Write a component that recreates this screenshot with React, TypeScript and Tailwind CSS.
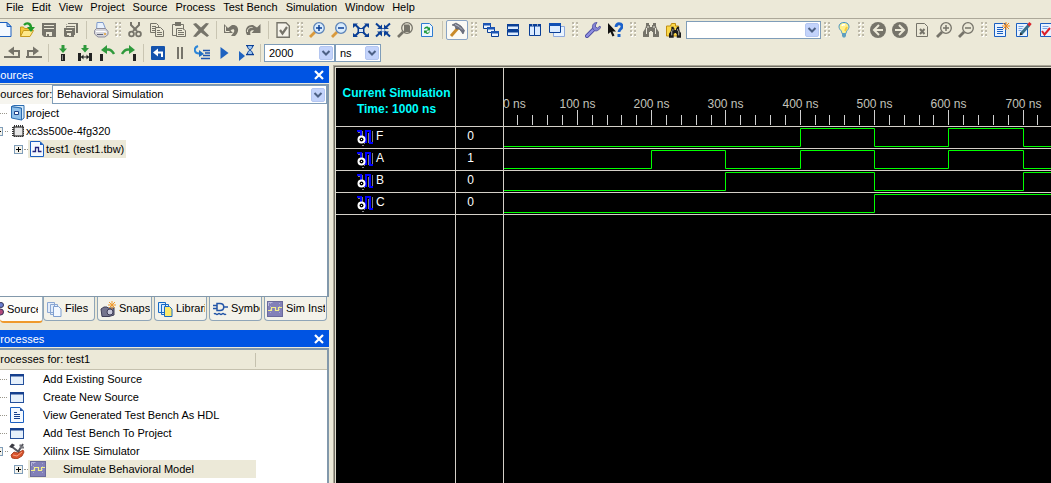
import type { ReactNode } from "react";

const G = "#76746a";
const NAVY = "#0a3f96";

function Ico({ children, className = "" }: { children: ReactNode; className?: string }) {
  return (
    <svg viewBox="0 0 16 16" className={`size-4 shrink-0 ${className}`} fill="none" aria-hidden="true">
      {children}
    </svg>
  );
}

/* ---------- toolbar drawings ---------- */

const PageBlue = ({ children }: { children?: ReactNode }) => (
  <>
    <path d="M2.500 .500h7.500l4 4v10h-11.500z" fill="#f4f9ff" stroke="#1b5fc0" />
    <path d="M10 .500v4h4z" fill="#a9cdf2" stroke="#1b5fc0" />
    {children}
  </>
);

const Magnifier = ({ rim, glass, handle, sign }: { rim: string; glass: string; handle: string; sign: string }) => (
  <>
    <path d="M6 10L1 15" stroke={handle} strokeWidth="2.800" />
    <circle cx="10" cy="6" r="5.300" fill={glass} stroke={rim} strokeWidth="1.300" />
    {sign === "plus" && <path d="M7 6h6M10 3v6" stroke={rim === G ? G : NAVY} strokeWidth="1.500" />}
    {sign === "minus" && <path d="M7 6h6" stroke={rim === G ? G : NAVY} strokeWidth="1.500" />}
  </>
);

const Binoculars = ({ color }: { color: string }) => (
  <>
    <path d="M3 1h3v2h1v2h2V3h1V1h3v3l1 3 2 3v5h-6v-5H9V9H7v1H6v5H0v-5l2-3 1-3z" fill={color} />
    <path d="M3.500 6v6M12.500 6v6M5 4v2M11 4v2" stroke="#e9e6da" />
  </>
);

const Folder = () => (
  <path d="M1.500 14V4h4l1-2.500h4V4h3v10z" fill="#fbd84a" stroke="#c18f10" />
);

const icons: Record<string, ReactNode> = {
  new: <PageBlue />,
  open: (
    <>
      <path d="M1.500 14V5h3l1 1.500h5V14z" fill="#f5c93a" stroke="#c79a1e" />
      <path d="M1.500 14.500l3-6h10l-3.500 6z" fill="#ffe98a" stroke="#c79a1e" />
      <path d="M5 3c3-3 7-1.500 7 3" stroke="#229a2b" strokeWidth="2.400" />
      <path d="M8 5h8L12 10z" fill="#229a2b" />
    </>
  ),
  save: (
    <>
      <path d="M1 1h14v14H3l-2-2z" fill={G} />
      <path d="M3 3.500h10M3 6.500h10" stroke="#ece9d8" />
      <path d="M5 10h6v4H8v-2H6v2H5z" fill="#ece9d8" />
    </>
  ),
  saveall: (
    <>
      <path d="M5 1h10v10h-2V3H5zM3 3h1v-1M3 4h9v9h-2V6H3z" fill={G} />
      <path d="M1 6h10v9H2l-1-1z" fill={G} />
      <path d="M3 8.500h6M5 2.500h8M3.500 5.500h8" stroke="#ece9d8" />
      <path d="M4 11h4v3H6v-1H4z" fill="#ece9d8" />
    </>
  ),
  print: (
    <>
      <path d="M3.500 8L4 .500h6l3 7.500z" fill="#e8f1fc" stroke="#7f9bcc" />
      <path d="M1.500 8.500l2-2h9l2.500 3v3l-3 2.500h-7L1.500 12z" fill="#d6d6dc" stroke="#8e8e9c" />
      <path d="M3 9.500h9l2 1" stroke="#fff" />
      <path d="M4 12.500h6" stroke="#5f6478" />
      <path d="M11 12h2" stroke="#e4a030" strokeWidth="1.500" />
    </>
  ),
  cut: (
    <>
      <path d="M4 0v3l6 6M12 0v3L6 9" stroke={G} strokeWidth="2" />
      <circle cx="4.500" cy="12" r="2.400" stroke={G} strokeWidth="1.800" />
      <circle cx="11.500" cy="12" r="2.400" stroke={G} strokeWidth="1.800" />
    </>
  ),
  copy: (
    <>
      <path d="M1.500 1.500h6l2 2v7h-8z" fill="#ece9d8" stroke={G} />
      <path d="M3 4.500h4M3 6.500h5M3 8.500h3" stroke={G} />
      <path d="M6.500 5.500h5l3 3v6h-8z" fill="#ece9d8" stroke={G} />
      <path d="M8 8.500h3M8 10.500h5M8 12.500h5" stroke={G} />
    </>
  ),
  paste: (
    <>
      <path d="M1.500 2.500h11v11h-11z" stroke={G} />
      <path d="M4 0h6v4H4z" fill={G} />
      <path d="M5.500 6.500h6l3 2v6h-9z" fill="#ece9d8" stroke={G} />
      <path d="M7 8.500h4M7 10.500h6M7 12.500h6" stroke={G} />
    </>
  ),
  del: <path d="M0 2l3-1 5 4.500L13 1l3 .500-5.500 6.500 5.500 5.500L14 15l-6-4.500L3 15l-3-.500L5.500 8z" fill={G} />,
  undo: (
    <>
      <path d="M1 2v9h9L7.500 8.500C10 6.500 12 7 11 10l-3 4h4c5-4 4-12-3-11L5 6z" fill={G} />
      <path d="M2.500 4.500v5h4" stroke="#ece9d8" />
    </>
  ),
  redo: (
    <>
      <path d="M15.500 2v9h-9L9 8.500C6 7.500 4.500 9 5.500 13H2C-1 8 2 2 8 3l4 2.500z" fill={G} />
      <path d="M2.500 10c-.5-3 2-5 5-4.500" stroke="#ece9d8" />
    </>
  ),
  checkdoc: (
    <>
      <path d="M2 .700h9l3.300 3.300v11.300H2z" fill="#f5f3ea" stroke={G} strokeWidth="1.400" />
      <path d="M5 8l2.500 3.500L12 5" stroke={G} strokeWidth="2.200" />
    </>
  ),
  zoomin: <Magnifier rim="#5b83b8" glass="#d9ecfd" handle="#d99a3c" sign="plus" />,
  zoomout: <Magnifier rim="#5b83b8" glass="#d9ecfd" handle="#d99a3c" sign="minus" />,
  fit: (
    <>
      <path d="M2 2.500l12 11.500M14 2.500L2 14" stroke={NAVY} strokeWidth="2" />
      <path d="M0 6V1.500h5zM16 6V1.500h-5zM0 11v4h5zM16 11v4h-5zM4.500 6h7v5h-7z" fill={NAVY} />
      <path d="M6 7h4v3H6z" fill="#dce6ef" />
    </>
  ),
  shrink: (
    <>
      <path d="M1 1.500l14 13M15 1.500l-14 13" stroke={NAVY} strokeWidth="2" />
      <path d="M2 7h5V2.500zM14 7H9V2.500zM2 9.500h5v5zM14 9.500H9v5z" fill={NAVY} />
      <path d="M6.500 7h3v2.500h-3z" fill="#dce6ef" />
    </>
  ),
  findgray: (
    <>
      <path d="M6 10L1 15" stroke={G} strokeWidth="2.600" />
      <circle cx="10" cy="6" r="5.300" fill="#ece9d8" stroke={G} strokeWidth="1.300" />
      <path d="M7 2.500h5l1 1.500v6H7z" fill={G} />
    </>
  ),
  refresh: (
    <>
      <path d="M2.500 1.500h8l3 3v10h-11z" fill="#edf6ff" stroke="#2e7bd0" />
      <path d="M5 7c1-3 4-3 5-1l1-1v3.500H7.500L9 7C8 6 6.500 6 6 7z" fill="#1d9a3a" />
      <path d="M11 9.500c-1 3-4 3-5 1l-1 1V8.500h3.500L7.500 10c.5 1 2 1 2.500-.500z" fill="#1d9a3a" />
    </>
  ),
  hammer: (
    <>
      <path d="M9 6L2 14" stroke="#c98b2b" strokeWidth="3" />
      <path d="M3 3l4-2 5 3 3.500 4.500L14 12l-2-3-2-2H7l-1-3z" fill="#6f7382" stroke="#4c5060" strokeWidth=".600" />
      <path d="M6 2.500l4 2 3 3" stroke="#b9bdc9" />
    </>
  ),
  cascade: (
    <>
      <path d="M.500 1.500h7v5h-7zM4.500 5.500h7v5h-7zM8.500 9.500h7v5h-7z" fill="#e9f3ff" stroke={NAVY} />
      <path d="M0 1h8v2.500H0zM4 5h8v2.500H4zM8 9h8v2.500H8z" fill="#1d56b5" />
    </>
  ),
  tileh: (
    <>
      <path d="M2.500 2.500h11v5h-11zM2.500 8.500h11v5h-11z" fill="#dcecff" stroke={NAVY} />
      <path d="M2 2h12v2.500H2zM2 8h12v2.500H2z" fill={NAVY} />
    </>
  ),
  tilev: (
    <>
      <path d="M2.500 2.500h5v11h-5zM7.500 2.500h6v11h-6z" fill="#dcecff" stroke={NAVY} />
      <path d="M2 2h12v2.500H2z" fill={NAVY} />
      <path d="M5 3h1M10 3h1" stroke="#fff" />
    </>
  ),
  windows: (
    <>
      <path d="M4.500 4.500h11v10h-11z" fill="#e9f3ff" stroke="#8ea9dc" />
      <path d="M.500 1.500h11v9H.500z" fill="#dcecff" stroke={NAVY} />
      <path d="M0 1h12v3H0z" fill="#0f4fb4" />
    </>
  ),
  wrench: (
    <>
      <path d="M2 14l7-7" stroke="#4a4a9e" strokeWidth="4" strokeLinecap="round" />
      <path d="M2 14l7-7" stroke="#8f8fe0" strokeWidth="2.400" strokeLinecap="round" />
      <path d="M12 .500C8 .500 6.500 4 8 7s5.500 2.500 7.500-1.500l-.500-1.500-2.500 2-2-1 0-2z" fill="#8484d4" stroke="#4a4a9e" strokeWidth=".800" />
    </>
  ),
  whats: (
    <>
      <path d="M1 1v11l2.500-2 2 4.500 2-1-2-4H9z" fill="#111" />
      <path d="M9 5c0-4.500 6-4 6-.500 0 2.500-3 2.500-3 5.500" stroke="#1b62cc" strokeWidth="2.800" />
      <path d="M10.500 12h3v3h-3z" fill="#1b62cc" />
    </>
  ),
  binoc: <Binoculars color={G} />,
  folderbinoc: (
    <>
      <Folder />
      <g transform="translate(4 4) scale(.78)">
        <Binoculars color="#1b1b1b" />
      </g>
    </>
  ),
  bulb: (
    <>
      <path d="M8 .500c-5 0-6 4.500-4 7 1.500 1.500 1.500 2 2 4h4c.5-2 .5-2.500 2-4 2-2.500 1-7-4-7z" fill="#fff08a" stroke="#3f93c9" />
      <path d="M6 4c.5-1.500 2-1.500 3-1" stroke="#fff" strokeWidth="1.500" />
      <path d="M9 9l2-4" stroke="#f8c93c" strokeWidth="2" />
      <path d="M6 11h4v3l-1 1.500H7L6 14z" fill="#5f9fc0" />
    </>
  ),
  back: (
    <>
      <circle cx="8" cy="8" r="8" fill={G} />
      <path d="M9 3L4 8l5 5M4 8h9" stroke="#ece9d8" strokeWidth="2" />
    </>
  ),
  fwd: (
    <>
      <circle cx="8" cy="8" r="8" fill={G} />
      <path d="M7 3l5 5-5 5M12 8H3" stroke="#ece9d8" strokeWidth="2" />
    </>
  ),
  docx: (
    <>
      <path d="M2.500 1.500h8l3 3v10h-11z" stroke={G} />
      <path d="M6 7l4.500 5M10.500 7L6 12" stroke={G} strokeWidth="2" />
    </>
  ),
  gzoomin: <Magnifier rim={G} glass="#ece9d8" handle={G} sign="plus" />,
  gzoomout: <Magnifier rim={G} glass="#ece9d8" handle={G} sign="minus" />,
  docstar: (
    <>
      <path d="M.500 1.500h11v13H.500z" fill="#e9f3ff" stroke="#1b5fc0" />
      <path d="M3 5.500h6M3 7.500h6M3 9.500h6M3 11.500h6" stroke="#1b5fc0" />
      <path d="M12 0v8M8 4h8M9 1l6 6M15 1L9 7" stroke="#ef8a1d" />
    </>
  ),
  docpencil: (
    <>
      <path d="M.500 1.500h11v13H.500z" fill="#e9f3ff" stroke="#1b5fc0" />
      <path d="M2.500 4.500h5M2.500 6.500h4M2.500 8.500h3" stroke="#7aa4e0" />
      <path d="M5 12l8-9" stroke="#38708c" strokeWidth="3" />
      <path d="M12.500 3.500l2-2.500" stroke="#d8262c" strokeWidth="3" />
      <path d="M3.500 13.500l1-3 2 2z" fill="#222" />
    </>
  ),
  doccheck: (
    <>
      <path d="M2.500 1.500h11v13h-11z" fill="#e9f3ff" stroke="#1b5fc0" />
      <path d="M4.500 4.500h6M4.500 6.500h5" stroke="#7aa4e0" />
      <path d="M4 9l2.500 3.500L12 6" stroke="#dc1f28" strokeWidth="2" />
    </>
  ),
  stepback: (
    <>
      <path d="M0 12h7M5 13v-2M15 13V6H8M5 12h10" stroke={G} strokeWidth="2" />
      <path d="M10 1.500v9L4 6z" fill={G} />
    </>
  ),
  stepfwd: (
    <>
      <path d="M0 12h16M2 12V6h7" stroke={G} strokeWidth="2" />
      <path d="M7 1.500v9L13 6z" fill={G} />
    </>
  ),
  marker: (
    <>
      <path d="M6.500 0h3v3.500H12L8 8 4 3.500h2.500z" fill="#2f9a3c" />
      <path d="M6 9h4v7H6z" fill="#222" />
      <path d="M7.500 10v5" stroke="#888" />
    </>
  ),
  markers: (
    <>
      <path d="M6.500 0h3v3H12L8 7.500 4 3h2.500z" fill="#2f9a3c" />
      <path d="M1 8h3v8H1zM12 8h3v8h-3zM4 11.500h8v1H4z" fill="#222" />
      <path d="M4 12l2.500-2.500v5zM12 12L9.500 9.500v5z" fill="#222" />
    </>
  ),
  prevmark: (
    <>
      <path d="M6 5c4-1.500 7 0 9 4" stroke="#2f9a3c" strokeWidth="2.400" />
      <path d="M8 0v9L2 5z" fill="#2f9a3c" />
      <path d="M1 9h3v7H1z" fill="#222" />
    </>
  ),
  nextmark: (
    <>
      <path d="M10 5C6 3.500 3 5 1 9" stroke="#2f9a3c" strokeWidth="2.400" />
      <path d="M8 0v9l6-4z" fill="#2f9a3c" />
      <path d="M12 9h3v7h-3z" fill="#222" />
    </>
  ),
  restart: (
    <>
      <rect x="1" y="1" width="14" height="14" rx="1" fill="#1453ad" />
      <path d="M12 12V7.500H6" stroke="#fff" strokeWidth="2" />
      <path d="M8 3.500v8l-5-4z" fill="#fff" />
    </>
  ),
  pause: <path d="M5 2h2v12H5zM9 2h2v12H9z" fill={G} />,
  runlines: (
    <>
      <path d="M4 1C-1 3 0 9 6 8.500" stroke="#2c86d8" strokeWidth="2" />
      <path d="M5 5l5 4-5 3z" fill="#1f6fc4" />
      <path d="M9 5.500h7M11 8h5M9 10.500h7M7 13.500h9" stroke="#1c56ae" strokeWidth="1.300" />
    </>
  ),
  play: <path d="M4.500 2v12l8-6z" fill="#1f63c0" />,
  playtime: (
    <>
      <path d="M1 6v10l6-5z" fill="#1f63c0" />
      <path d="M8 .500h8M8 9.500h8" stroke={NAVY} strokeWidth="1.500" />
      <path d="M9.500 1c0 3 1.500 3 2.500 4 1-1 2.500-1 2.500-4M9.500 9c0-3 1.500-3 2.500-4 1 1 2.500 1 2.500 4" fill="#9cc4ef" stroke={NAVY} />
    </>
  ),
};

function Tool({ name, label, on = false }: { name: string; label: string; on?: boolean }) {
  return (
    <button
      type="button"
      aria-label={label}
      title={label}
      className={`grid h-5 w-[22px] shrink-0 place-items-center ${on ? "rounded-xs border border-[#8aa4c4] bg-[#fbfaf5]" : ""}`}
    >
      <Ico>{icons[name]}</Ico>
    </button>
  );
}

function Tools({ items }: { items: [string, string][] }) {
  return (
    <div className="flex items-center">
      {items.map(([n, l]) => (
        <Tool key={n} name={n} label={l} />
      ))}
    </div>
  );
}

const Sep = ({ narrow = false }: { narrow?: boolean }) => (
  <span className={`flex shrink-0 justify-center ${narrow ? "w-[7px]" : "w-2"}`}>
    <span className="h-[18px] w-px bg-[#c9c5b2]" />
  </span>
);

function Grip({ wide = false }: { wide?: boolean }) {
  return (
    <span className={`flex shrink-0 justify-center ${wide ? "w-3.5" : "w-3"}`}>
      <svg width="6" height="16" aria-hidden="true" shapeRendering="crispEdges">
        {[0, 4, 8, 12].map((y) => (
          <g key={y}>
            <path d={`M1 ${y + 1}h2v2h-2zM5 ${y + 1}h1v2h-1z`} fill="#fff" />
            <path d={`M0 ${y}h2v2h-2zM4 ${y}h2v2h-2z`} fill="#bdb9a9" />
          </g>
        ))}
      </svg>
    </span>
  );
}

function Combo({ label, options, className }: { label: string; options: string[]; className: string }) {
  return (
    <span className={`grid shrink-0 items-center border border-[#7f9db9] bg-white ${className}`}>
      <select
        aria-label={label}
        className="col-start-1 row-start-1 h-full w-full min-w-0 appearance-none bg-transparent pl-1 text-black outline-none"
      >
        {options.map((o) => (
          <option key={o}>{o}</option>
        ))}
      </select>
      <svg
        viewBox="0 0 14 14"
        className="pointer-events-none col-start-1 row-start-1 mr-px size-3.5 justify-self-end"
        aria-hidden="true"
      >
        <rect x=".5" y=".5" width="13" height="13" rx="1.500" fill="#c3d3fb" stroke="#b4c6f0" />
        <path d="M3.500 5l3.500 3.500L10.500 5" fill="none" stroke="#4d6185" strokeWidth="2" />
      </svg>
    </span>
  );
}

/* ---------- dock parts ---------- */

function DockTitle({ children }: { children: ReactNode }) {
  return (
    <div className="flex h-[17px] items-center justify-between bg-[#0054e3] pr-1 text-white">
      <h2 className="-ml-[7px] leading-4">{children}</h2>
      <button type="button" aria-label="Close panel">
        <svg width="12" height="10" viewBox="0 0 12 10" aria-hidden="true">
          <path d="M2 1l8 8M10 1L2 9" stroke="#fff" strokeWidth="2.200" />
        </svg>
      </button>
    </div>
  );
}

const Dots = ({ className }: { className: string }) => (
  <span className={`h-px shrink-0 border-t border-dotted border-[#9a978c] ${className}`} />
);

function Expander({ open = false }: { open?: boolean }) {
  return (
    <button type="button" aria-label={open ? "Collapse" : "Expand"} className="shrink-0">
      <svg width="9" height="9" viewBox="0 0 9 9" shapeRendering="crispEdges" aria-hidden="true">
        <rect x=".5" y=".5" width="8" height="8" fill="#f4f2ea" stroke="#7f9db9" />
        <path d={open ? "M2 4.500h5" : "M2 4.500h5M4.500 2v5"} stroke="#000" />
      </svg>
    </button>
  );
}

const WaveTile = () => (
  <>
    <rect x=".5" y=".5" width="15" height="15" fill="#8280b8" stroke="#6a6a9c" />
    <path d="M1.500 5V1.500h4" stroke="#b9b8de" />
    <path d="M3.500 2v12M12.500 2v12" stroke="#a9a8d0" strokeDasharray="1 2" />
    <path d="M1 9.500h3.500v-3h4v3h3v-3H15" stroke="#f2ef8a" strokeWidth="1.200" />
  </>
);

const WindowIcon = () => (
  <>
    <rect x="1.500" y="3.500" width="13" height="10" fill="#e6f0fb" stroke="#24509c" />
    <path d="M1 3h14v2.500H1z" fill="#16408e" />
  </>
);

const tabs = [
  {
    label: "Sources",
    width: "w-[43px]",
    active: true,
    icon: (
      <>
        <circle cx="8" cy="4" r="3" fill="#5a9e68" stroke="#335" />
        <circle cx="13" cy="4" r="2.500" fill="#6a7ed0" stroke="#335" />
        <circle cx="12.500" cy="11" r="3" fill="#b24a7a" stroke="#335" />
      </>
    ),
  },
  {
    label: "Files",
    width: "w-[52px]",
    icon: (
      <>
        <path d="M1.500 1.500h7v10h-7zM4.500 3.500h7v10h-7z" fill="#e3edfb" stroke="#8aa6d2" />
        <path d="M7.500 5.500h5l2.500 2.500v7.500H7.500z" fill="#f3f8ff" stroke="#7f9fd0" />
      </>
    ),
  },
  {
    label: "Snapshots",
    width: "w-[55px]",
    icon: (
      <>
        <path d="M1 8l3-2h3l1 1h6v7l-5 1.500H2z" fill="#74748e" stroke="#3e3e58" />
        <circle cx="10" cy="11" r="3" fill="#c9c9dc" stroke="#3e3e58" />
        <path d="M12 0v8M8 4h8M9 1l6 6M15 1L9 7" stroke="#ef9a2d" />
      </>
    ),
  },
  {
    label: "Libraries",
    width: "w-[53px]",
    icon: (
      <>
        <path d="M1.500 1.500h7v10h-7zM4.500 3.500h7v10h-7z" fill="#d8ecff" stroke="#1669c4" />
        <path d="M7.500 5.500h5l2.500 2.500v7.500H7.500z" fill="#fce96a" stroke="#1669c4" />
      </>
    ),
  },
  {
    label: "Symbols",
    width: "w-[53px]",
    icon: (
      <>
        <path d="M5 2.500h3c5 0 5 7 0 7H5zM1 4.500h4M1 7.500h4M12 6h4" stroke="#2456a8" strokeWidth="1.500" />
        <path d="M2 13c2-2 2 2 4 0s2 2 4 0 2 2 4 0" stroke="#2456a8" strokeWidth="1.500" />
      </>
    ),
  },
  { label: "Sim Instances", width: "w-[63px]", icon: <WaveTile /> },
];

const processes = ["Add Existing Source", "Create New Source", "View Generated Test Bench As HDL", "Add Test Bench To Project"];

/* ---------- waveform ---------- */

const NS = 0.743;
const signals = [
  { name: "F", value: "0", start: 0, edges: [400, 500, 600, 700] },
  { name: "A", value: "1", start: 0, edges: [200, 300, 400, 500, 600, 700] },
  { name: "B", value: "0", start: 0, edges: [300, 500, 700] },
  { name: "C", value: "0", start: 0, edges: [500] },
];

const px = (ns: number) => Math.floor(ns * NS) - 0.5;

function wavePath(start: number, edges: number[]) {
  const y = (v: number) => (v ? 1.5 : 19.5);
  let v = start;
  let d = `M-1 ${y(v)}`;
  for (const e of edges) {
    d += `H${px(e)}`;
    v = 1 - v;
    d += `V${y(v)}`;
  }
  return `${d}H4000`;
}

function Ruler() {
  const ticks = Array.from({ length: 50 }, (_, i) => i + 1);
  return (
    <svg className="block h-[58px] w-full" aria-label="Time ruler">
      {ticks.map((i) => (
        <path key={i} d={`M${px(i * 20)} ${i % 5 ? 47 : 42}V57`} stroke="#d0d0d0" />
      ))}
      <text x="-1" y="40" fill="#c4c4bc">0 ns</text>
      {ticks.slice(0, 10).map((i) => (
        <text key={i} x={px(i * 100)} y="40" fill="#c4c4bc" textAnchor="middle">
          {i * 100} ns
        </text>
      ))}
    </svg>
  );
}

const SignalIcon = () => (
  <svg width="16" height="16" viewBox="0 0 16 16" className="shrink-0" aria-hidden="true" shapeRendering="crispEdges">
    <path d="M0 0h5v6H3V2H0zM8 0h6v12h2v2h-4V2h-2v11H7V11h1z" fill="#0000ff" />
    <path d="M5.500 1v5M1 2.500h2M11.500 3v10M15.500 1v11M5 15.500h2M7.500 14v-1" fill="none" stroke="#808080" />
    <circle cx="4.500" cy="9.500" r="4" fill="#fff" shapeRendering="auto" />
    <circle cx="4.500" cy="9.500" r="2" fill="#000" shapeRendering="auto" />
    <path d="M4 9h1v1H4z" fill="#fff" />
  </svg>
);

export default function App() {
  return (
    <div className="flex min-h-screen flex-col overflow-hidden bg-[#ece9d8] font-['Liberation_Sans',Arial,sans-serif] text-[11px] whitespace-nowrap text-black">
      <nav className="flex h-[19px] items-center gap-2 border-b border-[#aca899] pb-1 pl-1.5" aria-label="Main menu">
        {["File", "Edit", "View", "Project", "Source", "Process", "Test Bench", "Simulation", "Window", "Help"].map((m) => (
          <button key={m} type="button">
            {m}
          </button>
        ))}
      </nav>

      <div className="-ml-1.5 flex h-[22px] items-center" role="toolbar" aria-label="Standard">
        <Tools items={[["new", "New"], ["open", "Open"], ["save", "Save"], ["saveall", "Save All"]]} />
        <Sep />
        <Tool name="print" label="Print" />
        <Grip />
        <Tools items={[["cut", "Cut"], ["copy", "Copy"], ["paste", "Paste"], ["del", "Delete"]]} />
        <Sep />
        <Tools items={[["undo", "Undo"], ["redo", "Redo"]]} />
        <Sep />
        <Tool name="checkdoc" label="Check" />
        <Grip />
        <Tools
          items={[
            ["zoomin", "Zoom In"],
            ["zoomout", "Zoom Out"],
            ["fit", "Zoom Full"],
            ["shrink", "Zoom Selection"],
            ["findgray", "Zoom Box"],
            ["refresh", "Refresh"],
          ]}
        />
        <Sep />
        <Tool name="hammer" label="Toggle Tools" on />
        <Grip />
        <Tools items={[["cascade", "Cascade"], ["tileh", "Tile Horizontally"], ["tilev", "Tile Vertically"], ["windows", "Arrange"]]} />
        <Grip wide />
        <Tools items={[["wrench", "Preferences"], ["whats", "Context Help"]]} />
        <Grip wide />
        <Tools items={[["binoc", "Find"], ["folderbinoc", "Find in Files"]]} />
        <Combo label="Search text" options={[""]} className="ml-0.5 h-[18px] w-[135px]" />
        <Grip />
        <Tool name="bulb" label="Tips" />
        <Grip />
        <Tools items={[["back", "Back"], ["fwd", "Forward"], ["docx", "Stop"], ["gzoomin", "Magnify"], ["gzoomout", "Reduce"]]} />
        <Grip wide />
        <Tools items={[["docstar", "New Report"], ["docpencil", "Edit Report"], ["doccheck", "Verify Report"]]} />
      </div>

      <div className="flex h-6 items-center pl-px" role="toolbar" aria-label="Simulation">
        <Tools items={[["stepback", "Previous"], ["stepfwd", "Next"]]} />
        <Sep narrow />
        <Tools
          items={[
            ["marker", "Add Marker"],
            ["markers", "Measure"],
            ["prevmark", "Previous Marker"],
            ["nextmark", "Next Marker"],
          ]}
        />
        <Sep narrow />
        <Tools
          items={[
            ["restart", "Restart"],
            ["pause", "Pause"],
            ["runlines", "Step"],
            ["play", "Run All"],
            ["playtime", "Run For Time"],
          ]}
        />
        <Sep narrow />
        <Combo label="Run time" options={["2000"]} className="h-[18px] w-[71px]" />
        <Combo label="Time unit" options={["ns", "us", "ps"]} className="h-[18px] w-[46px]" />
      </div>

      <div className="flex flex-1">
        <aside className="flex w-[333px] shrink-0 flex-col overflow-hidden pt-px pr-1">
          <section className="flex flex-col">
            <DockTitle>Sources</DockTitle>
            <div className="mt-px border-t border-r-2 border-b border-[#8298ab] bg-white">
              <div className="flex items-center bg-[#f6f5ef]">
                <span className="-ml-[7px] w-[59px]">Sources for:</span>
                <Combo label="Sources for" options={["Behavioral Simulation"]} className="h-[19px] flex-1" />
              </div>
              <ul className="h-48">
                <li className="flex h-[18px] items-center">
                  <Dots className="mr-[3px] w-[7px]" />
                  <Ico>
                    <path d="M1.500 1.500l10 1.500v12l-10-2z" fill="#8fc0ea" stroke="#2b6cb0" />
                    <path d="M1.500 1.500l2-1h10.500V13l-2.500 2V3z" fill="#d8ecfb" stroke="#2b6cb0" />
                    <path d="M4.500 6.500h4v3h-4z" fill="#fff" stroke="#1c3f86" />
                  </Ico>
                  <span>project</span>
                </li>
                <li className="flex h-[18px] items-center">
                  <span className="-ml-1.5 flex w-4 items-center">
                    <Expander open />
                    <Dots className="ml-0.5 w-[3px]" />
                  </span>
                  <Ico>
                    <path
                      d="M4.500 2v12M6.500 2v12M8.500 2v12M10.500 2v12M12.500 2v12M2 4.500h12M2 6.500h12M2 8.500h12M2 10.500h12M2 12.500h12"
                      stroke="#333"
                    />
                    <rect x="4" y="4" width="9" height="9" fill="#e8e8e8" stroke="#333" strokeWidth="1.200" />
                  </Ico>
                  <span>xc3s500e-4fg320</span>
                </li>
                <li className="flex h-[18px] items-center pl-3.5">
                  <Expander />
                  <Dots className="ml-px w-1" />
                  <span className="flex h-[18px] items-center bg-[#ece9d8] pr-0.5 pl-px">
                    <Ico>
                      <path d="M1.500.500H11l3.500 3.500v11.500h-13z" fill="#f4f9ff" stroke="#1b5fc0" />
                      <path d="M11 .500V4h3.500z" fill="#1b5fc0" />
                      <path d="M3.500 10.500h3v-4h3v4h3" stroke="#23237a" strokeWidth="1.300" />
                    </Ico>
                    <span className="pl-px">test1 (test1.tbw)</span>
                  </span>
                </li>
              </ul>
            </div>
            <div className="flex gap-0.5 pr-0.5" role="tablist">
              {tabs.map((t) => (
                <button
                  key={t.label}
                  type="button"
                  role="tab"
                  aria-selected={!!t.active}
                  className={`flex shrink-0 items-center overflow-hidden rounded-b-sm border-r ${t.width} ${
                    t.active
                      ? "-mr-0.5 h-[26px] border-b-2 border-[#9fb3c4] border-b-[#ef9a2d] bg-[#fdfdfa] pr-1"
                      : "h-6 border-b border-l border-[#8fa5b8] bg-[#f3f2ea] pr-px pl-0.5"
                  }`}
                >
                  <Ico className={t.active ? "-ml-3" : ""}>{t.icon}</Ico>
                  <span className="min-w-0 overflow-hidden pl-[3px]">{t.label}</span>
                </button>
              ))}
            </div>
          </section>

          <section className="mt-[7px] flex flex-1 flex-col">
            <DockTitle>Processes</DockTitle>
            <div className="mt-px flex flex-1 flex-col border-t-2 border-r-2 border-[#8298ab] bg-white">
              <div className="flex h-5 items-center border-b border-[#c5c1ae] bg-[#ece9d8]">
                <span className="-ml-[7px] w-[262px]">Processes for: test1</span>
                <span className="h-3.5 w-px bg-[#c5c1ae]" />
              </div>
              <ul>
                {processes.map((p, i) => (
                  <li key={p} className="flex h-[18px] items-center">
                    <Dots className="mr-0.5 w-[7px]" />
                    <Ico>
                      {i === 2 ? (
                        <>
                          <path d="M1.500.500H11L14.500 4v11.500h-13z" fill="#f4f9ff" stroke="#1b5fc0" />
                          <path d="M11 .500V4h3.500z" fill="#24509c" />
                          <path d="M5 5.500h3M5 7.500h6M5 9.500h6M5 11.500h6" stroke="#16408e" />
                        </>
                      ) : (
                        <WindowIcon />
                      )}
                    </Ico>
                    <span className="pl-[18px]">{p}</span>
                  </li>
                ))}
                <li className="flex h-[18px] items-center">
                  <span className="-ml-1.5 flex w-[15px] items-center">
                    <Expander open />
                    <Dots className="ml-0.5 w-[3px]" />
                  </span>
                  <Ico>
                    <path d="M2 3l9 7M14 1l-5 8" stroke="#55565e" strokeWidth="2" />
                    <path d="M0 4l3-3.500 3 1.500-3 3z" fill="#3a3a42" />
                    <path d="M11 1.500l1 3h3" stroke="#77787f" strokeWidth="1.800" />
                    <path d="M2 12l3-3 4 1 5-3 1 2-2 4-5 3-5-1z" fill="#d9532c" stroke="#9c3214" strokeWidth=".800" />
                    <path d="M4 12l4 1 5-4" stroke="#f5a183" />
                  </Ico>
                  <span className="pl-[18px]">Xilinx ISE Simulator</span>
                </li>
                <li className="flex h-[18px] items-center pl-3.5">
                  <Expander />
                  <Dots className="ml-px w-1" />
                  <span className="flex h-[18px] w-[228px] items-center bg-[#ece9d8] pl-0.5">
                    <Ico>
                      <WaveTile />
                    </Ico>
                    <span className="pl-[17px]">Simulate Behavioral Model</span>
                  </span>
                </li>
              </ul>
            </div>
          </section>
        </aside>

        <main className="flex min-w-0 flex-1 bg-[#e2dfd0] pt-[3px] pl-[3px] shadow-[inset_1px_1px_0_#aca899,inset_2px_2px_0_#716f64]">
          <table className="grid flex-1 grid-cols-[120px_48px_minmax(0,1fr)] grid-rows-[59px_repeat(4,22px)_1fr] overflow-hidden bg-black text-xs text-white">
            <thead className="contents">
              <tr className="contents">
                <th className="border-r border-b border-[#d4d0c8] pt-[17px] pl-0.5 leading-4 font-bold text-[#00ffff]">
                  Current Simulation
                  <br />
                  Time: 1000 ns
                </th>
                <th className="border-r border-b border-[#d4d0c8]" aria-label="Value" />
                <th className="border-b border-[#d4d0c8] p-0 font-normal">
                  <Ruler />
                </th>
              </tr>
            </thead>
            <tbody className="contents">
              {signals.map((s) => (
                <tr key={s.name} className="contents">
                  <td className="flex items-center gap-[3px] border-r border-b border-[#d4d0c8] pl-[21px] leading-[18px]">
                    <SignalIcon />
                    <span className="pb-[3px]">{s.name}</span>
                  </td>
                  <td className="border-r border-b border-[#d4d0c8] pr-[18px] text-center leading-[18px]">{s.value}</td>
                  <td className="border-b border-[#d4d0c8] p-0">
                    <svg className="block h-[21px] w-full" role="img" aria-label={`${s.name} waveform`}>
                      <path d={wavePath(s.start, s.edges)} fill="none" stroke="#00ff00" />
                    </svg>
                  </td>
                </tr>
              ))}
              <tr className="contents">
                <td className="border-r border-[#d4d0c8]" />
                <td className="border-r border-[#d4d0c8]" />
                <td />
              </tr>
            </tbody>
          </table>
        </main>
      </div>
    </div>
  );
}
